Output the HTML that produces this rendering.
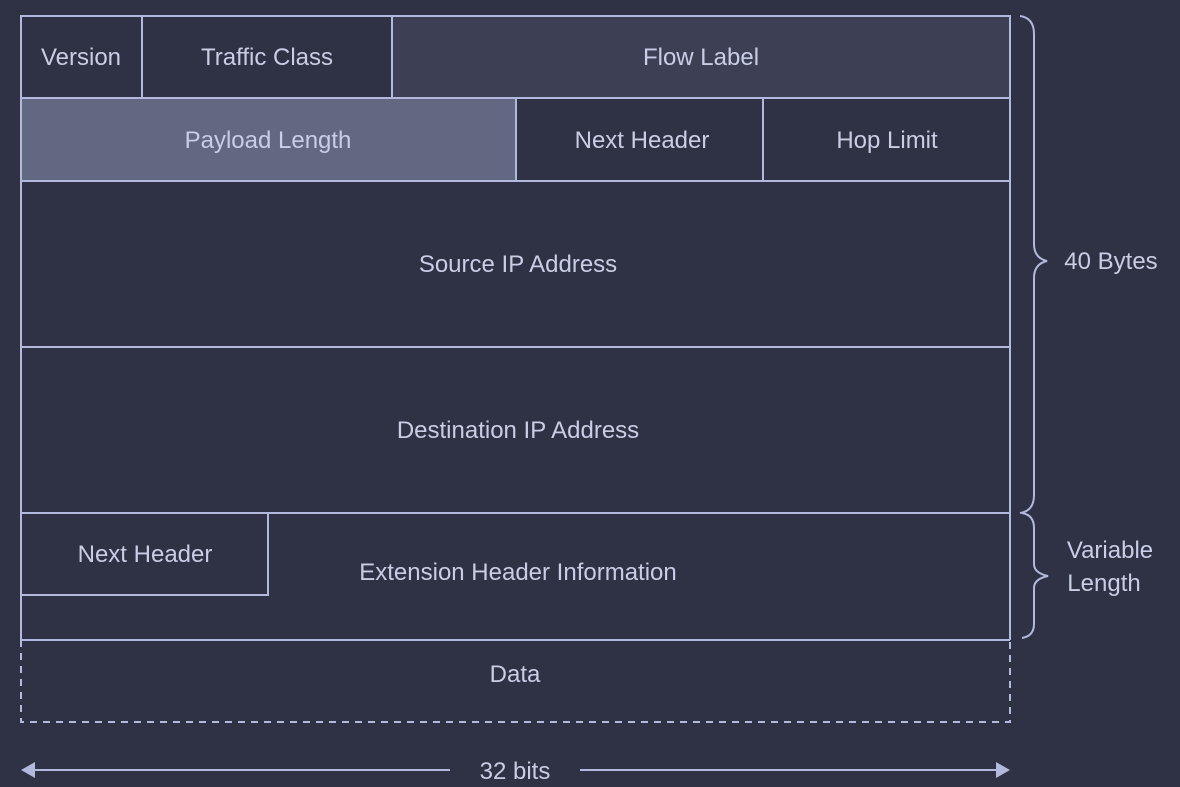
<!DOCTYPE html>
<html><head><meta charset="utf-8"><style>
html,body{margin:0;padding:0;background:#2f3144;}
svg{display:block}
text{font-family:"Liberation Sans",sans-serif;font-size:24px;fill:#c9cde6;text-anchor:middle;}
</style></head><body>
<svg width="1180" height="787" viewBox="0 0 1180 787">
<rect width="1180" height="787" fill="#2f3144"/>
<rect x="392" y="16" width="618" height="82" fill="#3d4055"/>
<rect x="21" y="98" width="495" height="83" fill="#626882"/>
<g stroke="#b3b9dc" stroke-width="2" fill="none">
<path d="M21 640V16H1010V640"/>
<path d="M21 98H1010M21 181H1010M21 347H1010M21 513H1010M21 640H1010"/>
<path d="M142 16V98M392 16V98M516 98V181M763 98V181"/>
<path d="M21 595H268V513"/>
<path d="M21 640V722H1010V640" stroke-dasharray="7 6"/>
<path d="M1020 16Q1034 18 1034 34V244Q1034 258 1047 261Q1034 264 1034 278V495Q1034 511 1020 513"/>
<path d="M1022 513Q1034 515 1034 528V564Q1034 573 1048 576Q1034 579 1034 588V624Q1034 636 1022 638"/>
<path d="M32 770H450M580 770H998"/>
</g>
<path d="M21 770L35 762V778Z M1010 770L996 762V778Z" fill="#b3b9dc"/>
<text x="81" y="65">Version</text>
<text x="267" y="65">Traffic Class</text>
<text x="701" y="65">Flow Label</text>
<text x="268" y="148">Payload Length</text>
<text x="642" y="148">Next Header</text>
<text x="887" y="148">Hop Limit</text>
<text x="518" y="272">Source IP Address</text>
<text x="518" y="438">Destination IP Address</text>
<text x="145" y="562">Next Header</text>
<text x="518" y="580">Extension Header Information</text>
<text x="515" y="682">Data</text>
<text x="515" y="779">32 bits</text>
<text x="1111" y="269">40 Bytes</text>
<text x="1110" y="558">Variable</text>
<text x="1104" y="591">Length</text>
</svg>
</body></html>
